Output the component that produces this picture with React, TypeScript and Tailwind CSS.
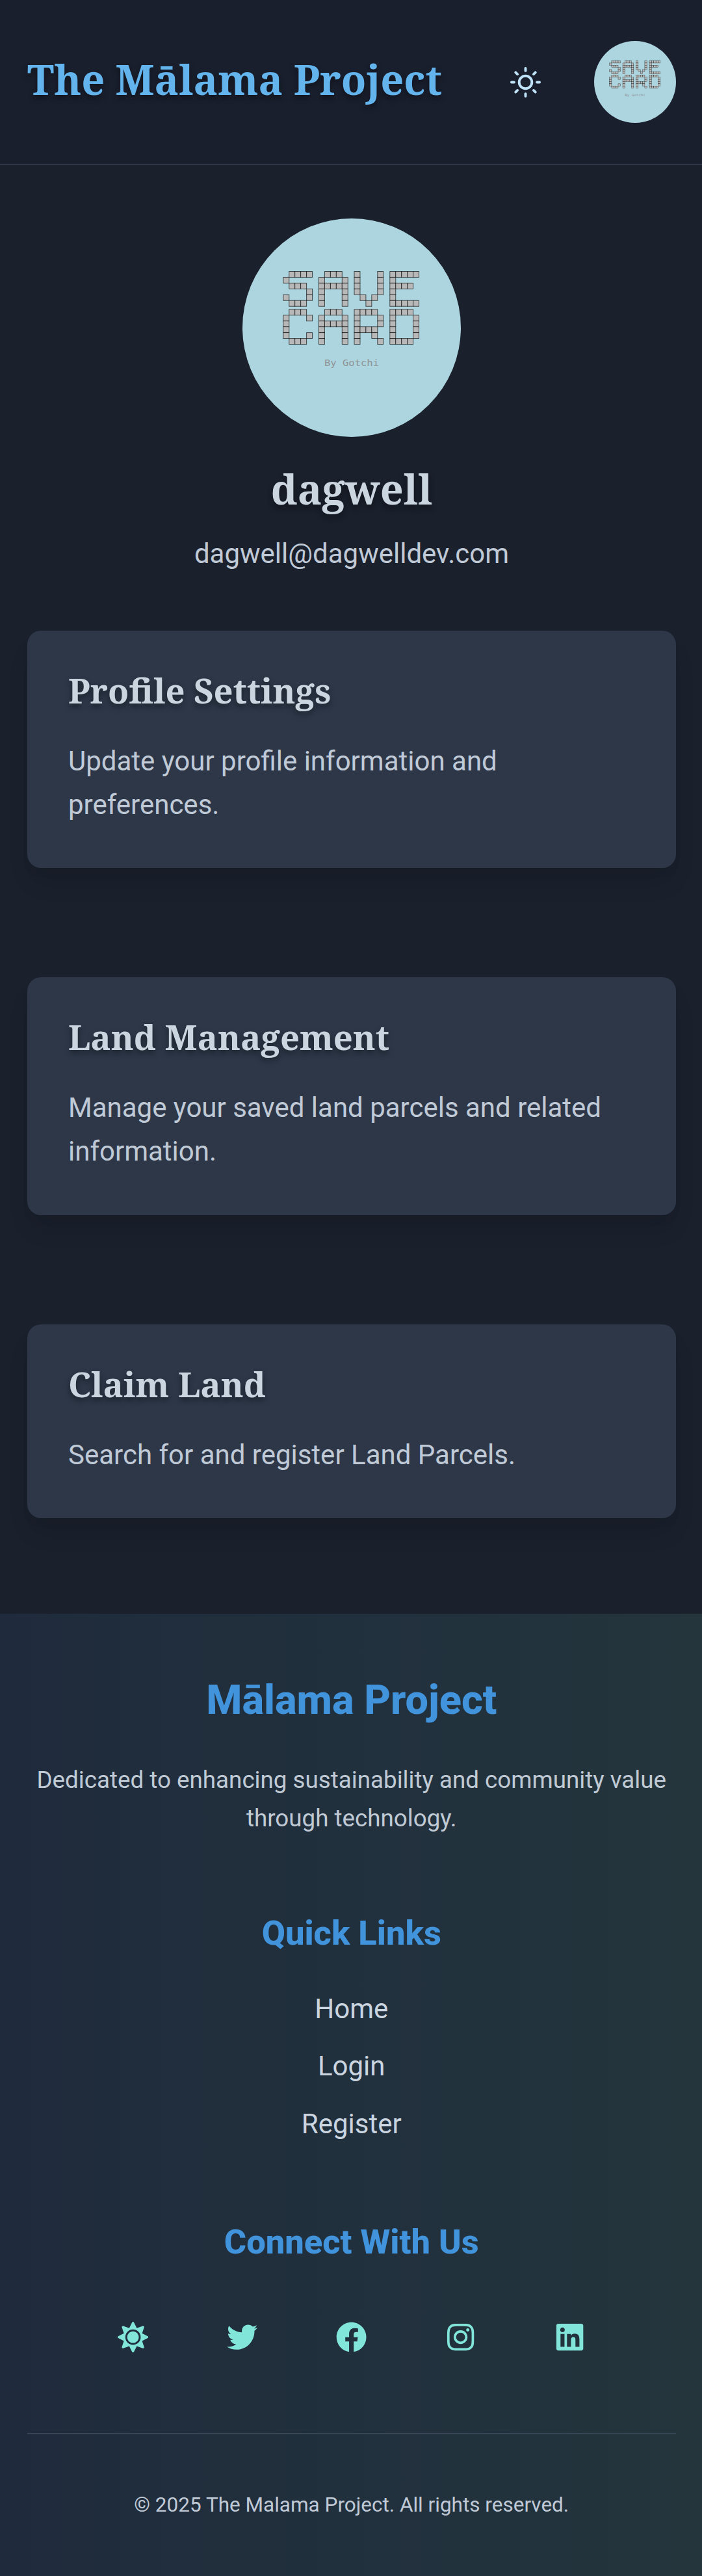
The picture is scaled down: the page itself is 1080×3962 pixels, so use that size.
import React from "react";
import { FiSun } from "react-icons/fi";
import { FaSun, FaTwitter, FaFacebook, FaInstagram, FaLinkedin } from "react-icons/fa";

const serif = "font-['Noto_Serif','Liberation_Serif',serif]";
const shadow = "[text-shadow:0_5px_10px_rgba(0,0,0,0.4)]";

const SAVE = [
  [".####", "#....", ".###.", "....#", "#...#", ".###."],
  [".###.", "#...#", "#####", "#...#", "#...#", "#...#"],
  ["#...#", "#...#", "#...#", "#...#", ".#.#.", "..#.."],
  ["#####", "#....", "####.", "#....", "#....", "#####"],
];
const CARD = [
  [".###.", "#...#", "#....", "#....", "#...#", ".###."],
  [".###.", "#...#", "#####", "#...#", "#...#", "#...#"],
  ["####.", "#...#", "#...#", "####.", "#..#.", "#...#"],
  ["####.", "#...#", "#...#", "#...#", "#...#", "####."],
];
const LEFT = [62.8, 117.5, 172, 226.8];

function Word({ rows, top, ink }: { rows: string[][]; top: number; ink: number }) {
  return (
    <g fill="#b8b8b8" stroke="#000" strokeOpacity={ink} strokeWidth="1">
      {rows.map((letter, i) =>
        letter.flatMap((row, y) =>
          row.split("").map((c, x) =>
            c === "#" ? <rect key={i + "-" + y + "-" + x} x={LEFT[i] + x * 8.95} y={top + y * 8.95} width="8.95" height="8.95" /> : null,
          ),
        ),
      )}
    </g>
  );
}

function Logo({ className, ink }: { className: string; ink: number }) {
  return (
    <svg viewBox="0 0 336 336" className={className}>
      <circle cx="168" cy="168" r="168" fill="#add5df" />
      <Word rows={SAVE} top={81.5} ink={ink} />
      <Word rows={CARD} top={139.8} ink={ink} />
      <text
        x="126"
        y="227.3"
        fontSize="13.7"
        textLength="84"
        lengthAdjust="spacingAndGlyphs"
        fill="#8f9497"
        fontFamily="DejaVu Sans Mono, monospace"
      >
        By Gotchi
      </text>
    </svg>
  );
}

function Card({ title, text, className }: { title: string; text: string; className: string }) {
  return (
    <section className={"rounded-[21px] bg-[#2d3748] px-[63px] shadow-[0_26px_39px_-8px_rgba(0,0,0,0.1),0_10px_16px_-5px_rgba(0,0,0,0.05)] " + className}>
      <h2 className={"pt-[60px] text-[52.5px] leading-[63px] font-bold text-[#cbd5e0] " + serif + " " + shadow}>{title}</h2>
      <p className="mt-[44px] text-[42px] leading-[67.2px] text-[#c0cad7]">{text}</p>
    </section>
  );
}

export default function App() {
  return (
    <div className="flex h-[3962px] w-[1080px] flex-col overflow-hidden bg-[#1a202c] font-['Roboto',sans-serif] text-[#cbd5e0]">
      <header className="flex h-[254px] shrink-0 items-center border-b-2 border-[#2d3748] bg-[#1a1f2d] pr-[40px] pl-[42px]">
        <h1 className={"mb-[8px] text-[63px] leading-[76px] font-bold whitespace-nowrap text-[#63b3ed] " + serif + " " + shadow}>
          The Mālama Project
        </h1>
        <FiSun className="ml-auto size-[47px] text-[#bee3f8]" />
        <Logo className="ml-[82px] size-[126px]" ink={0.85} />
      </header>
      <main className="flex h-[2228px] shrink-0 flex-col pr-[40px] pl-[42px]">
        <div className="flex h-[716px] flex-col items-center pt-[82px]">
          <Logo className="size-[336px] shrink-0" ink={0.65} />
          <h2 className={"mt-[42px] text-[63px] leading-[76px] font-bold " + serif + " " + shadow}>dagwell</h2>
          <p className="mt-[28px] text-[42px] leading-[67px] text-[#c0cad7]">dagwell@dagwelldev.com</p>
        </div>
        <div className="flex flex-col gap-[168px]">
          <Card className="h-[365px]" title="Profile Settings" text="Update your profile information and preferences." />
          <Card className="h-[366px]" title="Land Management" text="Manage your saved land parcels and related information." />
          <Card className="h-[298px]" title="Claim Land" text="Search for and register Land Parcels." />
        </div>
      </main>
      <footer className="flex h-[1480px] flex-col bg-linear-to-r from-[#1f2b3c] via-[#21303d] to-[#24353c] pr-[40.5px] pl-[42px] text-center">
        <h2 className="mt-[95px] text-[63px] leading-[75px] font-extrabold text-[#4193dc]">Mālama Project</h2>
        <p className="mt-[57px] text-[36.75px] leading-[58.8px] text-[#c0cad5]">
          Dedicated to enhancing sustainability and community value through technology.
        </p>
        <h3 className="mt-[115.9px] text-[52.5px] leading-[63px] font-extrabold text-[#4193dc]">Quick Links</h3>
        <nav className="mt-[50.4px] flex flex-col gap-[21.2px] text-[42px] leading-[67.2px]">
          <a>Home</a>
          <a>Login</a>
          <a>Register</a>
        </nav>
        <h3 className="mt-[117px] text-[52.5px] leading-[63px] font-extrabold text-[#4193dc]">Connect With Us</h3>
        <div className="mt-[91px] flex justify-center gap-[120.75px] text-[#81e6d9]">
          <FaSun className="size-[47.25px]" />
          <FaTwitter className="size-[47.25px]" />
          <FaFacebook className="size-[47.25px]" />
          <FaInstagram className="size-[47.25px]" />
          <FaLinkedin className="size-[47.25px]" />
        </div>
        <div className="mt-[123.8px] border-t-2 border-[#374554] pt-[83px]">
          <p className="text-[31.5px] leading-[51px] text-[#c0cad7]">© 2025 The Malama Project. All rights reserved.</p>
        </div>
      </footer>
    </div>
  );
}
